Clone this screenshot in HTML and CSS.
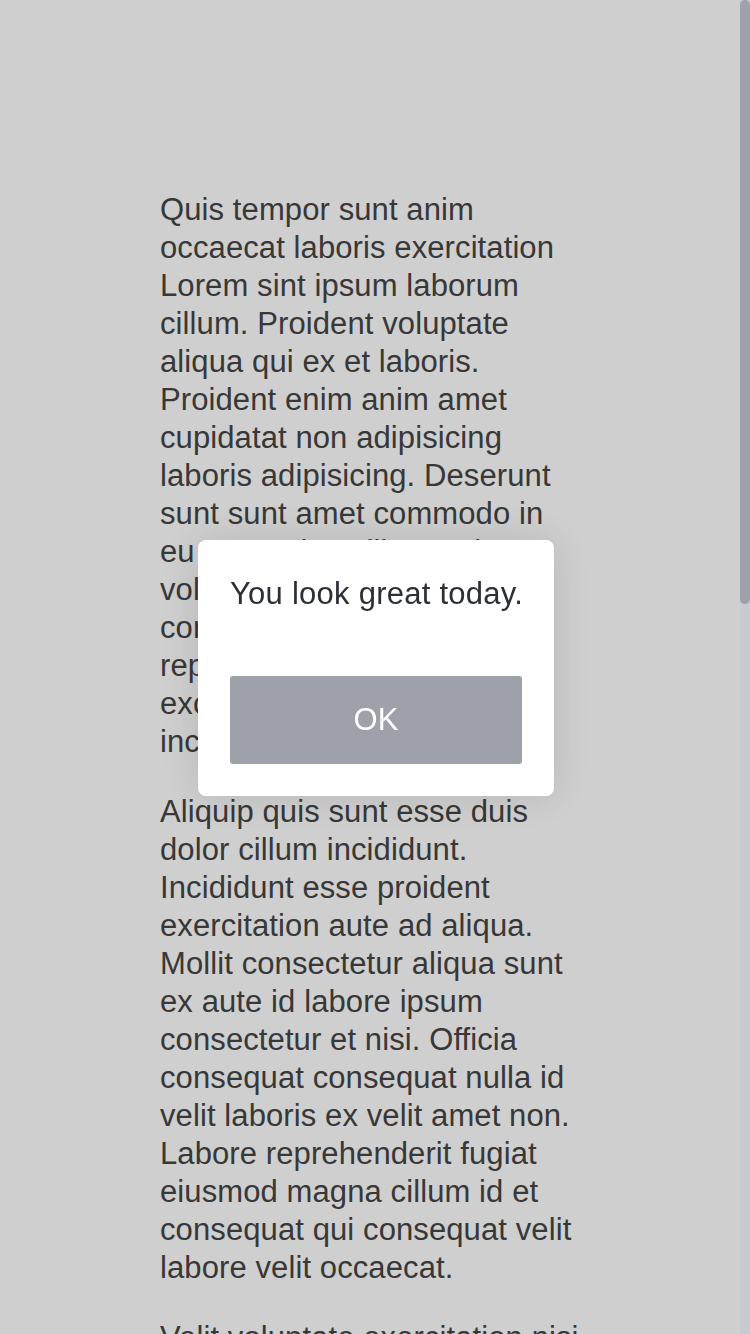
FILE: index.html
```html
<!DOCTYPE html>
<html lang="en">
<head>
<meta charset="utf-8">
<title>Dialog</title>
<link rel="stylesheet" href="styles.css">
</head>
<body>
<main class="content">
  <p>Quis tempor sunt anim occaecat laboris exercitation Lorem sint ipsum laborum cillum. Proident voluptate aliqua qui ex et laboris. Proident enim anim amet cupidatat non adipisicing laboris adipisicing. Deserunt sunt sunt amet commodo in eu nostrud ut cillum anim voluptate ea elit dolor consequat tempor in sint reprehenderit irure ut excepteur dolore aliqua incididunt.</p>
  <p>Aliquip quis sunt esse duis dolor cillum incididunt. Incididunt esse proident exercitation aute ad aliqua. Mollit consectetur aliqua sunt ex aute id labore ipsum consectetur et nisi. Officia consequat consequat nulla id velit laboris ex velit amet non. Labore reprehenderit fugiat eiusmod magna cillum id et consequat qui consequat velit labore velit occaecat.</p>
  <p>Velit voluptate exercitation nisi nulla aliqua deserunt. Amet ullamco irure fugiat nostrud est laborum duis sint. Ad consequat officia commodo pariatur esse ex labore. Eiusmod elit tempor anim sit adipisicing eu minim cupidatat. Culpa ad in occaecat ipsum velit deserunt sunt.</p>
  <p>Nostrud duis aute ullamco sunt exercitation eiusmod. Dolore ea est irure laboris minim cillum non elit. Enim consectetur cupidatat ad sint reprehenderit ut veniam in aliqua culpa.</p>
</main>
<div class="backdrop">
  <div class="dialog" role="dialog">
    <p class="dialog-message">You look great today.</p>
    <button class="dialog-button" type="button">OK</button>
  </div>
</div>
<div class="scrollbar" aria-hidden="true"><div class="scrollbar-thumb"></div></div>
</body>
</html>
```
FILE: styles.css
```css
html {
  background: #ffffff;
}
body {
  margin: 0;
  font-family: "Liberation Sans", Arial, sans-serif;
  color: #454545;
}
.content {
  width: 420px;
  padding: 159px 0 120px 160px;
  font-size: 31px;
  line-height: 38px;
  letter-spacing: 0.1px;
}
.content p {
  margin: 32px 0;
}
.backdrop {
  position: fixed;
  inset: 0;
  background: rgba(0, 0, 0, 0.19);
  display: flex;
  align-items: center;
  justify-content: center;
  padding: 2px 0 0 2px;
}
.dialog {
  width: 292px;
  padding: 32px;
  background: #ffffff;
  border-radius: 8px;
  box-shadow: 0 0 44px rgba(0, 0, 0, 0.13);
  display: flex;
  flex-direction: column;
}
.dialog-message {
  margin: 0 0 60px;
  font-size: 31px;
  line-height: 44px;
  letter-spacing: 0.25px;
  color: #2c2f36;
  white-space: nowrap;
}
.dialog-button {
  height: 88px;
  border: 0;
  border-radius: 3px;
  background: #9ea1a9;
  color: #ffffff;
  font-family: "Liberation Sans", Arial, sans-serif;
  font-size: 31px;
  padding: 0;
}
.scrollbar {
  position: fixed;
  top: 0;
  right: 0;
  bottom: 0;
  width: 10px;
  background: #c6cbcf;
}
.scrollbar-thumb {
  height: 604px;
  background: #9ea1a9;
  border-radius: 5px;
}
```
